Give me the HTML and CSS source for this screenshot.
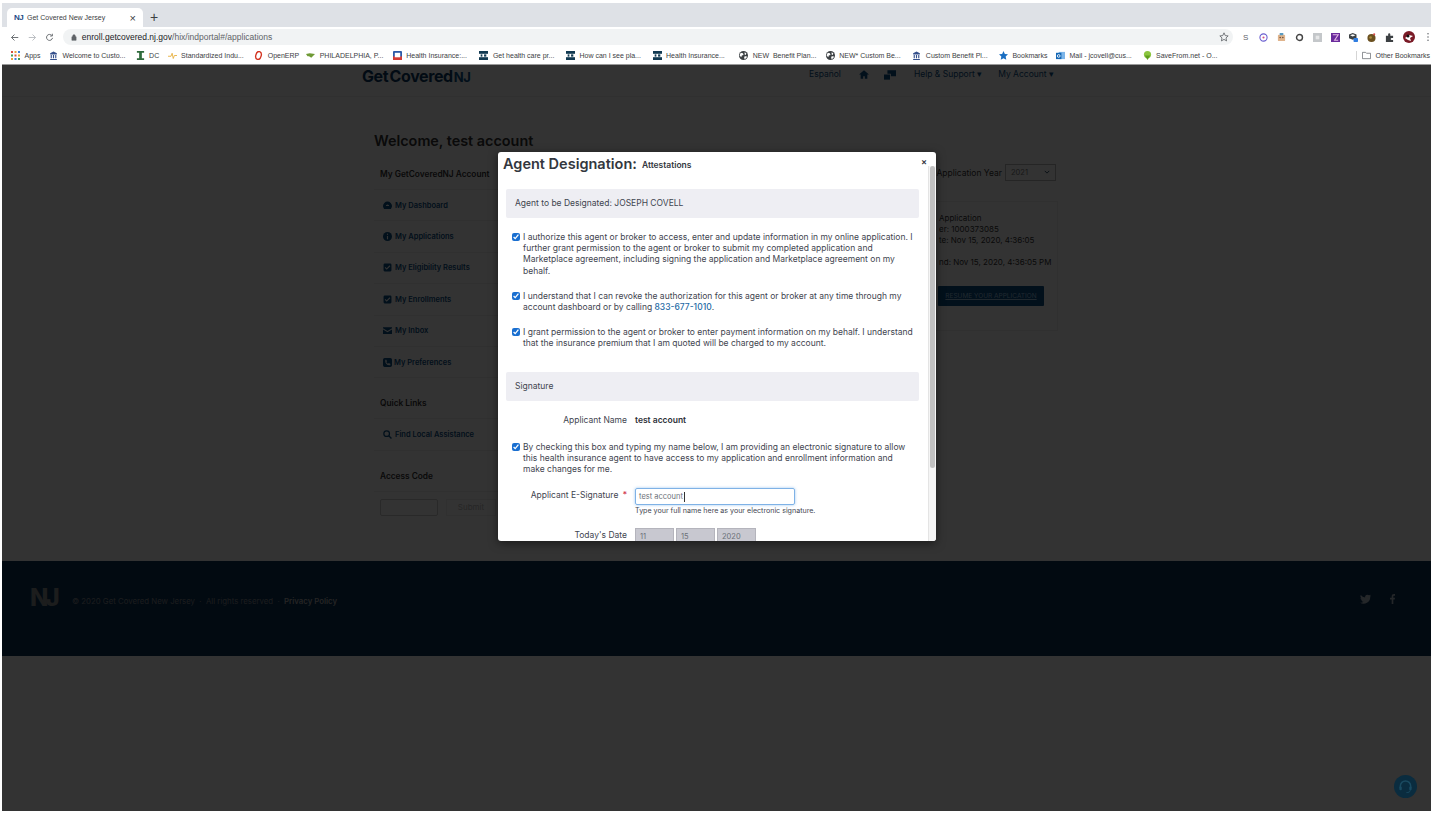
FILE: index.html
```html
<!DOCTYPE html>
<html lang="en">
<head>
    <meta charset="UTF-8">
    <meta name="viewport" content="width=device-width, initial-scale=1.0">
    <title>Get Covered New Jersey</title>
    <link rel="stylesheet" href="styles.css">
</head>
<body>
    <svg class="defs" width="0" height="0">
        <symbol id="i-globe" viewBox="0 0 16 16"><circle cx="8" cy="8" r="8" fill="#3c4043"/><path d="M3 3l4 1 1 3-3 1-1 3-3-3zM10 2l3 2-1 3-2-1zM9 10l4-1 1 2-4 4z" fill="#fff"/></symbol>
        <symbol id="i-hc" viewBox="0 0 16 16"><rect width="16" height="16" fill="#123a52"/><rect y="5" width="16" height="6" fill="#fff"/><rect x="3" y="6" width="3" height="4" fill="#123a52"/><rect x="9" y="6" width="4" height="4" fill="#123a52"/></symbol>
        <symbol id="i-bank" viewBox="0 0 16 16"><path d="M8 1l6 3v2H2V4z M3 7h2v6H3z M7 7h2v6H7z M11 7h2v6h-2z M2 14h12v2H2z" fill="#35508c"/></symbol>
        <symbol id="i-check" viewBox="0 0 16 16"><path d="M3 1h10a2 2 0 0 1 2 2v10a2 2 0 0 1-2 2H3a2 2 0 0 1-2-2V3a2 2 0 0 1 2-2zm3.6 11L13 5.6 11.6 4.2 6.6 9.2 4.4 7 3 8.4z" fill="#0a4f85" fill-rule="evenodd"/></symbol>
    </svg>

    <div class="screen">
        <div class="tabstrip">
            <div class="tab">
                <span class="tab-logo">NJ</span>
                <span class="tab-title">Get Covered New Jersey</span>
                <span class="tab-close">×</span>
            </div>
            <span class="tab-new">+</span>
        </div>

        <div class="toolbar">
            <svg class="nav-icon" viewBox="0 0 12 12"><path d="M11 6H2M6 2L2 6l4 4" fill="none" stroke="#5f6368" stroke-width="1.2"/></svg>
            <svg class="nav-icon" viewBox="0 0 12 12"><path d="M1 6h9M6 2l4 4-4 4" fill="none" stroke="#b6b9bd" stroke-width="1.2"/></svg>
            <svg class="nav-icon" viewBox="0 0 12 12"><path d="M10 6.5A4 4 0 1 1 9 3.2M9.8 1v3H6.8" fill="none" stroke="#5f6368" stroke-width="1.2"/></svg>
            <div class="address">
                <svg class="lock" viewBox="0 0 8 10"><path d="M1 4h6v5H1zM2.3 4V2.6a1.7 1.7 0 0 1 3.4 0V4" fill="#5f6368" stroke="#5f6368" stroke-width=".8"/></svg>
                <span class="url"><b>enroll.getcovered.nj.gov</b>/hix/indportal#/applications</span>
                <svg class="star" viewBox="0 0 12 12"><path d="M6 1l1.5 3.3 3.5.4-2.6 2.4.7 3.6L6 8.9l-3.1 1.8.7-3.6L1 4.700l3.500-.4z" fill="none" stroke="#5f6368"/></svg>
            </div>
            <div class="extensions">
                <span class="ext-s">S</span>
                <svg viewBox="0 0 10 10"><circle cx="5" cy="5" r="4" fill="none" stroke="#6a5fd0" stroke-width="1.200"/><circle cx="5" cy="5" r="1.200" fill="#d0508a"/></svg>
                <svg viewBox="0 0 10 10"><rect x="1" y="2" width="8" height="7" rx="1" fill="#e0b48c"/><rect x="3" y="0" width="4" height="2.500" fill="#5a9ac0"/><circle cx="3.500" cy="5" r=".8" fill="#5b4030"/><circle cx="6.500" cy="5" r=".8" fill="#5b4030"/></svg>
                <svg viewBox="0 0 10 10"><circle cx="5" cy="5" r="3.300" fill="none" stroke="#444" stroke-width="1.600"/></svg>
                <svg viewBox="0 0 10 10"><rect x="0" y="0" width="10" height="10" fill="#c4c7ca"/><rect x="3" y="3" width="4" height="4" fill="#e6e7e8"/></svg>
                <svg viewBox="0 0 10 10"><rect x="0" y="0" width="10" height="10" fill="#6a2c9c"/><path d="M2 2h6L4 8h4" fill="none" stroke="#e8b8e8" stroke-width="1.200"/></svg>
                <svg viewBox="0 0 12 12"><path d="M5 0l5 2v5l-5 2-5-2V2z" fill="#3c4043"/><path d="M5 1.500L8.500 3 5 4.500 1.500 3z" fill="#fff"/><rect x="6" y="6.500" width="6" height="5.500" rx="1" fill="#2f7de1"/></svg>
                <svg viewBox="0 0 10 10"><circle cx="5" cy="5.500" r="4.500" fill="#6b5020"/><circle cx="4" cy="5" r="1.500" fill="#a58a3c"/><circle cx="8" cy="1.500" r="1.200" fill="#d84a4a"/></svg>
                <svg viewBox="0 0 10 10"><path d="M1 3h2.500V1.500a1.200 1.200 0 0 1 2.400 0V3H9v2.500H7.500a1.200 1.200 0 0 0 0 2.400H9V10H1z" fill="#3c4043"/></svg>
                <svg class="ext-avatar" viewBox="0 0 12 12"><circle cx="6" cy="6" r="6" fill="#7a1a26"/><path d="M2 7l4-3 4 1-3 2 1 3-3-1z" fill="#fff"/><circle cx="5" cy="5" r="1.500" fill="#111"/></svg>
                <svg class="ext-dots" viewBox="0 0 4 12"><circle cx="2" cy="2" r=".9" fill="#5f6368"/><circle cx="2" cy="6" r=".9" fill="#5f6368"/><circle cx="2" cy="10" r=".9" fill="#5f6368"/></svg>
            </div>
        </div>

        <div class="bookmarks">
            <span class="bm bm-apps">
                <svg viewBox="0 0 9 9">
                    <rect width="2" height="2" fill="#d9503f"/><rect x="3.500" width="2" height="2" fill="#e6a33a"/><rect x="7" width="2" height="2" fill="#3f7fd9"/>
                    <rect y="3.500" width="2" height="2" fill="#3f9b5a"/><rect x="3.500" y="3.500" width="2" height="2" fill="#d9503f"/><rect x="7" y="3.500" width="2" height="2" fill="#e6a33a"/>
                    <rect y="7" width="2" height="2" fill="#e6a33a"/><rect x="3.500" y="7" width="2" height="2" fill="#3f7fd9"/><rect x="7" y="7" width="2" height="2" fill="#3f9b5a"/>
                </svg>Apps</span>
            <span class="bm"><svg viewBox="0 0 16 16"><use href="#i-bank"/></svg>Welcome to Custo...</span>
            <span class="bm bm-dc"><svg viewBox="0 0 10 10"><path d="M1 0h8v2H6.500v6H9v2H1V8h2.500V2H1z" fill="#2f6b3c"/></svg>DC</span>
            <span class="bm"><svg viewBox="0 0 12 10"><path d="M0 6h4l1.500-4L7 9l1.500-4H12" fill="none" stroke="#e6b040" stroke-width="1.200"/></svg>Standardized Indu...</span>
            <span class="bm bm-erp"><svg viewBox="0 0 10 10"><ellipse cx="5" cy="5" rx="3" ry="4.500" transform="rotate(15 5 5)" fill="none" stroke="#d3321f" stroke-width="1.500"/></svg>OpenERP</span>
            <span class="bm"><svg viewBox="0 0 12 8"><path d="M0 2l5-1 7 1-3 3-2 2-3-2H2z" fill="#6f9a35"/></svg>PHILADELPHIA, P...</span>
            <span class="bm"><svg viewBox="0 0 10 10"><rect width="10" height="10" rx="1" fill="#2c5aa8"/><rect y="6" width="10" height="4" fill="#d33b35"/><rect x="2" y="2" width="6" height="5" fill="#fff"/></svg>Health Insurance:...</span>
            <span class="bm"><svg viewBox="0 0 16 16"><use href="#i-hc"/></svg>Get health care pr...</span>
            <span class="bm"><svg viewBox="0 0 16 16"><use href="#i-hc"/></svg>How can I see pla...</span>
            <span class="bm"><svg viewBox="0 0 16 16"><use href="#i-hc"/></svg>Health Insurance...</span>
            <span class="bm"><svg viewBox="0 0 16 16"><use href="#i-globe"/></svg>NEW&nbsp; Benefit Plan...</span>
            <span class="bm"><svg viewBox="0 0 16 16"><use href="#i-globe"/></svg>NEW* Custom Be...</span>
            <span class="bm"><svg viewBox="0 0 16 16"><use href="#i-bank"/></svg>Custom Benefit Pl...</span>
            <span class="bm bm-marks"><svg viewBox="0 0 10 10"><path d="M5 0l1.500 3.300 3.500.4-2.600 2.400.7 3.600L5 8 1.900 9.700l.7-3.600L0 3.700l3.500-.4z" fill="#1a6ec2"/></svg>Bookmarks</span>
            <span class="bm"><svg viewBox="0 0 10 10"><rect x="3" y="1" width="7" height="8" fill="#7cb6ea"/><rect y="2" width="6" height="7" fill="#1668b5"/><circle cx="3" cy="5.500" r="1.500" fill="none" stroke="#fff"/></svg>Mail - jcovell@cus...</span>
            <span class="bm"><svg viewBox="0 0 10 10"><circle cx="5" cy="4" r="4" fill="#8cc63f"/><path d="M2 5h6L5 10z" fill="#5f9e1f"/></svg>SaveFrom.net - O...</span>
            <span class="bm bm-other"><svg viewBox="0 0 10 8"><path d="M.5.500h3.500l1 1h4.500v6H.5z" fill="none" stroke="#5f6368" stroke-width=".8"/></svg>Other Bookmarks</span>
        </div>

        <div class="page">
            <div class="site-header">
                <div class="site-header-inner">
                    <span class="brand">Get Covered<span class="brand-nj">NJ</span></span>
                    <nav class="site-nav">
                        <span class="nav-lang">Español</span>
                        <svg class="nav-home" viewBox="0 0 12 10"><path d="M6 0l6 5h-2v5H7V7H5v3H2V5H0z" fill="#0a4f85"/></svg>
                        <svg class="nav-mail" viewBox="0 0 14 12"><path d="M4 1h10v7H8V5H4z" fill="#0a4f85"/><path d="M0 6h7v6H0z" fill="#0a4f85"/></svg>
                        <span class="nav-link nav-help">Help &amp; Support ▾</span>
                        <span class="nav-link">My Account ▾</span>
                    </nav>
                </div>
            </div>

            <div class="main">
                <h1 class="welcome">Welcome, test account</h1>
                <div class="columns">
                    <aside class="sidebar">
                        <div class="side-title">My GetCoveredNJ Account</div>
                        <div class="side-row">
                            <svg viewBox="0 0 16 14"><path d="M8 0a8 8 0 0 1 8 8c0 2-1 4-2 5H2C1 12 0 10 0 8a8 8 0 0 1 8-8zm0 5a3 3 0 0 0-3 3h6a3 3 0 0 0-3-3z" fill="#0a4f85" fill-rule="evenodd"/></svg>
                            My Dashboard</div>
                        <div class="side-row">
                            <svg viewBox="0 0 16 16"><circle cx="8" cy="8" r="8" fill="#0a4f85"/><rect x="7" y="7" width="2" height="6" fill="#fff"/><rect x="7" y="3" width="2" height="2" fill="#fff"/></svg>
                            My Applications</div>
                        <div class="side-row"><svg viewBox="0 0 16 16"><use href="#i-check"/></svg>My Eligibility Results</div>
                        <div class="side-row"><svg viewBox="0 0 16 16"><use href="#i-check"/></svg>My Enrollments</div>
                        <div class="side-row">
                            <svg viewBox="0 0 16 12"><path d="M0 0h16v2L8 7 0 2zM0 4l8 5 8-5v8H0z" fill="#0a4f85"/></svg>
                            My Inbox</div>
                        <div class="side-row side-row-tight">
                            <svg viewBox="0 0 16 16"><path d="M3 0h10a3 3 0 0 1 3 3v10a3 3 0 0 1-3 3H3a3 3 0 0 1-3-3V3a3 3 0 0 1 3-3zm1 3v3c0 3 3 7 7 7h2v-3l-3-1-1 1c-1 0-3-2-3-3l1-1-1-3z" fill="#0a4f85" fill-rule="evenodd"/></svg>
                            My Preferences</div>

                        <div class="side-title side-title-gap">Quick Links</div>
                        <div class="side-row">
                            <svg viewBox="0 0 16 16"><circle cx="6.500" cy="6.500" r="5" fill="none" stroke="#0a4f85" stroke-width="2.200"/><path d="M10 10l5 5" stroke="#0a4f85" stroke-width="2.500"/></svg>
                            Find Local Assistance</div>

                        <div class="side-title side-title-gap">Access Code</div>
                        <div class="access-form">
                            <span class="access-input"></span>
                            <span class="access-submit">Submit</span>
                        </div>
                    </aside>

                    <section class="applications">
                        <div class="year-row">
                            <span class="year-label">Application Year</span>
                            <span class="year-select">2021 <svg viewBox="0 0 8 5"><path d="M1 1l3 3 3-3" fill="none" stroke="#2a4a66" stroke-width="1.300"/></svg></span>
                        </div>
                        <div class="app-card">
                            <p>Application</p>
                            <p>er: 1000373085</p>
                            <p>te: Nov 15, 2020, 4:36:05</p>
                            <p class="app-end">nd: Nov 15, 2020, 4:36:05 PM</p>
                            <a class="resume-btn">RESUME YOUR APPLICATION</a>
                        </div>
                    </section>
                </div>
            </div>

            <div class="site-footer">
                <span class="footer-logo">NJ</span>
                <span class="footer-copy">© 2020 Get Covered New Jersey &nbsp;·&nbsp; All rights reserved &nbsp;·&nbsp; <b>Privacy Policy</b></span>
                <span class="footer-social">
                    <svg viewBox="0 0 14 12"><path d="M14 1.500l-1.500.5L13.500.5l-2 .8A3 3 0 0 0 6.500 4 8 8 0 0 1 1 1a3 3 0 0 0 1 4l-1.400-.4A3 3 0 0 0 3 7.500H1.700A3 3 0 0 0 4.500 9.600 6 6 0 0 1 0 10.700 8.500 8.500 0 0 0 13 3z" fill="#fff"/></svg>
                    <svg viewBox="0 0 6 12"><path d="M2 12V6.500H0v-2h2V3c0-2 1-3 3-3h1v2H5c-1 0-1 .5-1 1v1.500h2l-.3 2H4V12z" fill="#fff"/></svg>
                </span>
            </div>

            <div class="overlay"></div>

            <div class="modal">
                <div class="modal-head">
                    <h2>Agent Designation:</h2>
                    <span>Attestations</span>
                    <span class="modal-close">×</span>
                </div>
                <div class="band">Agent to be Designated: JOSEPH COVELL</div>
                <label class="attest attest-first">
                    <input type="checkbox" checked>
                    <span>I authorize this agent or broker to access, enter and update information in my online application. I further grant permission to the agent or broker to submit my completed application and Marketplace agreement, including signing the application and Marketplace agreement on my behalf.</span>
                </label>
                <label class="attest">
                    <input type="checkbox" checked>
                    <span>I understand that I can revoke the authorization for this agent or broker at any time through my account dashboard or by calling <a class="phone">833-677-1010</a>.</span>
                </label>
                <label class="attest">
                    <input type="checkbox" checked>
                    <span>I grant permission to the agent or broker to enter payment information on my behalf. I understand that the insurance premium that I am quoted will be charged to my account.</span>
                </label>
                <div class="band band-signature">Signature</div>
                <div class="field field-name">
                    <span class="field-label">Applicant Name</span>
                    <b>test account</b>
                </div>
                <label class="attest attest-sign">
                    <input type="checkbox" checked>
                    <span>By checking this box and typing my name below, I am providing an electronic signature to allow this health insurance agent to have access to my application and enrollment information and make changes for me.</span>
                </label>
                <div class="field field-sign">
                    <span class="field-label">Applicant E-Signature <i class="required">*</i></span>
                    <div>
                        <div class="sign-input">test account<span class="caret"></span></div>
                        <div class="help">Type your full name here as your electronic signature.</div>
                    </div>
                </div>
                <div class="field field-date">
                    <span class="field-label">Today's Date</span>
                    <div class="date-boxes">
                        <span>11</span><span>15</span><span>2020</span>
                    </div>
                </div>
                <div class="scrollbar"><div class="thumb"></div></div>
            </div>

            <div class="chat-bubble">
                <svg viewBox="0 0 16 16"><path d="M2.500 10V7.500a5.500 5.500 0 0 1 11 0V10" fill="none" stroke="#1a4a60" stroke-width="1.600"/><rect x="1.500" y="8" width="2.500" height="4" rx="1" fill="#1a4a60"/><rect x="12" y="8" width="2.500" height="4" rx="1" fill="#1a4a60"/><path d="M13 12c0 2-2 2.500-4 2.500" fill="none" stroke="#1a4a60"/></svg>
            </div>
        </div>
    </div>
</body>
</html>
```

FILE: styles.css
```css
* {
    margin: 0;
    padding: 0;
    box-sizing: border-box;
}

html, body {
    height: 100%;
    overflow: hidden;
}

body {
    background: white;
    font-family: "Inter", "Liberation Sans", sans-serif;
}

.defs {
    position: absolute;
}

.screen {
    height: 814px;
    padding: 3px 12px 3px 2px;
    display: flex;
    flex-direction: column;
}

/* browser chrome */
.tabstrip {
    height: 24px;
    flex: none;
    background: #dee1e6;
    display: flex;
    align-items: flex-end;
    padding-left: 5px;
    font-family: "Liberation Sans", sans-serif;
}

.tab {
    width: 136px;
    height: 19px;
    background: white;
    border-radius: 5px 5px 0 0;
    display: flex;
    align-items: center;
    padding: 0 7px 0 7px;
    font-size: 7px;
    color: #3c4043;
}

.tab-logo {
    font-size: 8px;
    font-weight: bold;
    color: #1d4a86;
    letter-spacing: -0.5px;
    width: 13px;
}

.tab-title {
    flex: 1;
}

.tab-close {
    font-size: 11px;
    color: #3c4043;
}

.tab-new {
    font-size: 14px;
    color: #3c4043;
    margin-left: 7px;
    padding-bottom: 2px;
}

.toolbar {
    height: 18px;
    flex: none;
    display: flex;
    align-items: center;
    padding-left: 8px;
    padding-top: 2px;
    background: white;
    font-family: "Liberation Sans", sans-serif;
}

.nav-icon {
    width: 9px;
    height: 9px;
    margin-right: 8.600px;
}

.address {
    width: 1170px;
    height: 16px;
    background: #f1f3f4;
    border-radius: 8px;
    display: flex;
    align-items: center;
    padding: 0 4px 0 8px;
}

.lock {
    width: 6px;
    height: 7px;
    margin-right: 5px;
}

.url {
    flex: 1;
    font-size: 8.500px;
    color: #5f6368;
}

.url b {
    font-weight: normal;
    color: #202124;
}

.star {
    width: 10px;
    height: 10px;
}

.extensions {
    display: flex;
    align-items: center;
    gap: 9px;
    margin-left: 8.500px;
}

.extensions svg {
    width: 9px;
    height: 9px;
}

.extensions .ext-avatar {
    width: 12px;
    height: 12px;
}

.extensions .ext-dots {
    width: 4px;
    height: 10px;
    margin-left: 2px;
}

.ext-s {
    font-size: 8px;
    color: #5f6368;
    width: 9px;
    text-align: center;
}

.bookmarks {
    height: 20px;
    flex: none;
    background: white;
    border-bottom: 1px solid #9a9a9a;
    display: flex;
    align-items: center;
    padding: 1px 0 0 9px;
    font-family: "Liberation Sans", sans-serif;
    font-size: 7px;
    color: #3c4043;
    white-space: nowrap;
}

.bm {
    width: 86.600px;
    flex: none;
    display: flex;
    align-items: center;
    gap: 4.500px;
}

.bm svg {
    width: 9px;
    height: 9px;
    flex: none;
}

.bm-apps {
    width: 38px;
}

.bm-dc {
    width: 32px;
}

.bm-erp {
    width: 52px;
}

.bm-marks {
    width: 57px;
}

.bm-other {
    width: auto;
    margin-left: auto;
    border-left: 1px solid #d5d5d5;
    padding-left: 5px;
    margin-right: 1px;
}

/* page behind the dialog */
.page {
    flex: 1;
    position: relative;
    background: white;
    display: flex;
    flex-direction: column;
    overflow: hidden;
}

.site-header {
    height: 32px;
    flex: none;
    border-bottom: 1px solid #eee;
}

.site-header-inner {
    width: 692px;
    margin-left: 360px;
    display: flex;
    justify-content: space-between;
    height: 22px;
    align-items: center;
}

.brand {
    font-size: 16px;
    font-weight: 700;
    letter-spacing: -0.4px;
    word-spacing: -2px;
    color: #0a3a63;
}

.brand-nj {
    margin-left: 1px;
    font-size: 13px;
    color: #0a4f85;
}

.site-nav {
    display: flex;
    align-items: center;
    padding-bottom: 4px;
    font-size: 8.500px;
    color: #0a4f85;
}

.nav-home {
    width: 10px;
    height: 9px;
    margin: 0 15px 0 18px;
}

.nav-mail {
    width: 12px;
    height: 11px;
    margin-right: 18px;
}

.nav-help {
    margin-right: 16px;
}

.main {
    height: 464px;
    flex: none;
    padding: 35px 0 0 372px;
}

.welcome {
    font-size: 14.400px;
    font-weight: 600;
    color: #333;
    line-height: 18px;
    height: 27px;
}

.columns {
    width: 684px;
    display: flex;
    justify-content: space-between;
}

.sidebar {
    width: 124px;
}

.side-title {
    height: 31px;
    line-height: 31px;
    padding-left: 6px;
    font-size: 8.300px;
    font-weight: 600;
    white-space: nowrap;
    color: #333;
    border-bottom: 1px solid #eee;
}

.side-title-gap {
    margin-top: 10px;
}

.side-row {
    height: 31.400px;
    display: flex;
    align-items: center;
    padding-left: 9px;
    gap: 3px;
    font-size: 7.500px;
    font-weight: 600;
    color: #0a4f85;
    border-bottom: 1px solid #eee;
    white-space: nowrap;
}

.side-row svg {
    width: 9px;
    height: 9px;
}

.side-row-tight {
    gap: 2px;
}

.access-form {
    display: flex;
    gap: 8px;
    margin-top: 7px;
    padding-left: 6px;
}

.access-input {
    width: 58px;
    height: 17px;
    border: 1px solid #ccc;
    border-radius: 2px;
}

.access-submit {
    width: 50px;
    height: 17px;
    line-height: 15px;
    border: 1px solid #eee;
    text-align: center;
    font-size: 8px;
    color: #bbb;
    flex: none;
}

.applications {
    width: 122px;
    margin-top: 4.500px;
    font-size: 8.500px;
    color: #333;
}

.year-row {
    height: 20px;
    padding: 0 2px 3px 0;
    display: flex;
    justify-content: flex-end;
    align-items: center;
    gap: 3px;
    white-space: nowrap;
}

.year-label {
    padding-top: 2px;
}

.year-select {
    width: 51px;
    height: 17px;
    border: 1px solid #bbb;
    font-size: 7.500px;
    color: #777;
    padding: 0 5px;
    display: flex;
    align-items: center;
    justify-content: space-between;
}

.year-select svg {
    width: 6px;
    height: 4px;
}

.app-card {
    margin-top: 17px;
    height: 130px;
    border: 1px solid #eee;
    border-left: 0;
    padding: 11px 0 0 3px;
    font-size: 8px;
    line-height: 11px;
    white-space: nowrap;
}

.app-end {
    margin-top: 11px;
}

.resume-btn {
    display: block;
    width: 106px;
    height: 20px;
    margin: 18px 0 0 -1px;
    background: #0a4f85;
    border-radius: 1px;
    color: #9fc6e6;
    font-size: 6.500px;
    line-height: 20px;
    text-align: center;
    text-decoration: underline;
}

.site-footer {
    height: 95px;
    flex: none;
    background: #0a3258;
    display: flex;
    align-items: flex-start;
    padding: 21px 36px 0 28px;
    color: #8a8f94;
    font-size: 7.800px;
}

.footer-logo {
    width: 42px;
    font-size: 24px;
    line-height: 32px;
    font-weight: 800;
    letter-spacing: -3px;
    color: #8c8f92;
}

.footer-copy {
    flex: 1;
    margin-top: 14px;
}

.footer-copy b {
    color: #b4b4b4;
    font-weight: 600;
}

.footer-social {
    display: flex;
    gap: 19px;
    margin-top: 12px;
}

.footer-social svg {
    height: 10px;
    width: auto;
    opacity: 0.7;
}

.footer-social svg:first-child {
    width: 11px;
}

.footer-social svg:last-child {
    width: 5px;
}

.overlay {
    position: absolute;
    inset: 0;
    background: rgba(0, 0, 0, 0.8);
}

.chat-bubble {
    position: absolute;
    left: 1392px;
    top: 710px;
    width: 23px;
    height: 23px;
    border-radius: 50%;
    background: #0a2c3f;
    display: flex;
    align-items: center;
    justify-content: center;
}

.chat-bubble svg {
    width: 15px;
    height: 15px;
}

/* dialog */
.modal {
    position: absolute;
    left: 496px;
    top: 87px;
    width: 438px;
    height: 389px;
    background: white;
    border-radius: 3px;
    overflow: hidden;
    padding: 0 17px 0 8px;
    color: #3f4550;
    font-size: 8.500px;
    line-height: 11.200px;
    box-shadow: 0 2px 10px rgba(0, 0, 0, 0.5);
}

.modal-head {
    height: 37px;
    margin-left: -3px;
    display: flex;
    align-items: center;
    padding-bottom: 13px;
    gap: 5px;
    color: #33373e;
}

.modal-head h2 {
    font-size: 14.500px;
    font-weight: 600;
    line-height: 18px;
}

.modal-head span {
    font-size: 8.500px;
    font-weight: 600;
    padding-top: 3px;
}

.modal .modal-close {
    position: absolute;
    right: 9px;
    top: 1px;
    font-size: 9px;
    font-weight: 600;
}

.band {
    height: 29px;
    line-height: 29px;
    background: #eeeef3;
    border-radius: 2px;
    padding-left: 9px;
}

.band-signature {
    margin-top: 22px;
}

.attest {
    display: flex;
    margin-top: 14px;
    padding: 0 6px;
}

.attest input {
    width: 8px;
    height: 8px;
    margin: 1px 3px 0 0;
    flex: none;
    accent-color: #1a6fd0;
}

.attest-first {
    margin-top: 14px;
}

.attest-sign {
    margin-top: 16px;
}

.phone {
    color: #1d6aa5;
    font-weight: 500;
}

.field {
    display: flex;
    align-items: flex-start;
}

.field-label {
    width: 121px;
    flex: none;
    text-align: right;
    margin-right: 8px;
}

.field-name {
    margin-top: 14px;
}

.field-name b {
    font-weight: 600;
    color: #2d3138;
}

.required {
    color: #d0314a;
    font-style: normal;
    margin-left: 2px;
}

.field-sign {
    margin-top: 13px;
}

.field-sign .field-label {
    padding-top: 2px;
}

.sign-input {
    width: 160px;
    height: 17px;
    border: 1px solid #7fb2e6;
    box-shadow: 0 0 3px rgba(90, 160, 230, 0.6);
    border-radius: 2px;
    padding-left: 3px;
    font-size: 7.500px;
    line-height: 15px;
    color: #6b7078;
    display: flex;
    align-items: center;
}

.caret {
    width: 1px;
    height: 10px;
    background: #333;
    margin-left: 1px;
}

.help {
    font-size: 7.100px;
    line-height: 11px;
}

.field-date {
    margin-top: 12px;
}

.field-date .field-label {
    padding-top: 2px;
}

.date-boxes {
    display: flex;
    gap: 2px;
}

.date-boxes span {
    width: 39px;
    height: 17px;
    line-height: 15px;
    padding-left: 4px;
    background: #c8c8d0;
    border: 1px solid #b4b4bc;
    font-size: 7.500px;
    color: #6b7078;
}

.scrollbar {
    position: absolute;
    right: 0;
    top: 14px;
    bottom: 0;
    width: 8px;
    background: #f5f5f5;
    border-left: 1px solid #e4e4e4;
}

.thumb {
    width: 5px;
    height: 302px;
    margin-left: 1px;
    border-radius: 3px;
    background: #c1c1c1;
}
```
